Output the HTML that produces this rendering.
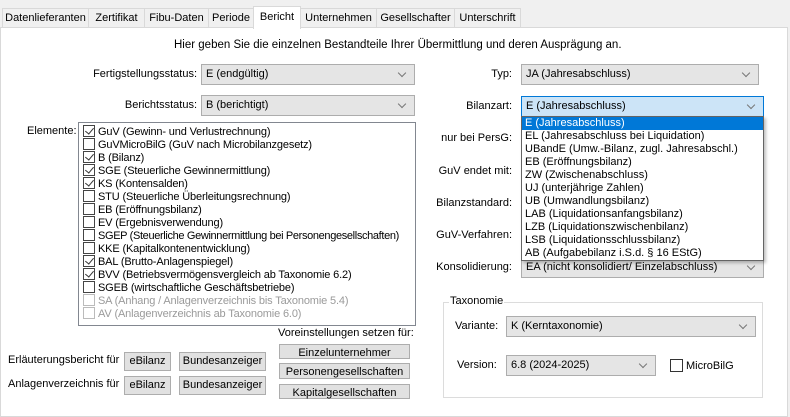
<!DOCTYPE html>
<html><head><meta charset="utf-8"><style>
*{box-sizing:border-box;margin:0;padding:0}
body{width:790px;height:415px;background:#f0f0f0;font-family:"Liberation Sans",sans-serif;font-size:11px;color:#000;position:relative;overflow:hidden}
.a{position:absolute;white-space:nowrap}
.tab{position:absolute;top:8px;height:20px;border:1px solid #d9d9d9;border-bottom:none;background:#f0f0f0;text-align:center;line-height:18px;white-space:nowrap}
.sel{top:6px;height:23px;background:#fff;z-index:3;line-height:20px}
.panel{position:absolute;left:0;top:27px;width:788px;height:390px;background:#fff;border:1px solid #d9d9d9}
.cb{position:absolute;height:21px;background:#e5e5e5;border:1px solid #adadad;padding-left:4px;line-height:19px;white-space:nowrap}
.cb::after{content:"";position:absolute;right:9px;top:5px;width:5px;height:5px;border-right:1px solid #777;border-bottom:1px solid #777;transform:rotate(45deg)}
.lbl{position:absolute;text-align:right;line-height:14px;white-space:nowrap}
.btn{position:absolute;background:#e1e1e1;border:1px solid #adadad;text-align:center;line-height:16px;white-space:nowrap}
.list{position:absolute;left:78px;top:122px;width:338px;height:204px;border:1px solid #828790;background:#fff;overflow:hidden}
.it{position:absolute;left:4px;height:13px;line-height:13px;white-space:nowrap;letter-spacing:-0.15px}
.ck{display:inline-block;width:12px;height:12px;border:1px solid #444;vertical-align:-2px;margin-right:3px;position:relative;background:#fff}
.ck.on::after{content:"";position:absolute;left:3px;top:0px;width:4px;height:7px;border-right:1.5px solid #333;border-bottom:1.5px solid #333;transform:rotate(40deg)}
.dis{color:#9a9a9a}.dis .ck{border-color:#bbb}
.dd{position:absolute;left:521px;top:116px;width:243px;height:145px;background:#fff;border:1px solid #646464;z-index:5;box-shadow:2px 2px 3px rgba(0,0,0,.25)}
.dd div{height:13px;line-height:13px;padding-left:3px;white-space:nowrap}
</style></head><body>
<div class="tab" style="left:2px;width:87px">Datenlieferanten</div>
<div class="tab" style="left:88px;width:57px">Zertifikat</div>
<div class="tab" style="left:144px;width:65px">Fibu-Daten</div>
<div class="tab" style="left:208px;width:46px">Periode</div>
<div class="tab sel" style="left:253px;width:48px">Bericht</div>
<div class="tab" style="left:300px;width:77px">Unternehmen</div>
<div class="tab" style="left:376px;width:79px">Gesellschafter</div>
<div class="tab" style="left:454px;width:67px">Unterschrift</div>
<div class="panel"></div>

<div class="a" style="left:174px;top:39px;font-size:11.5px">Hier geben Sie die einzelnen Bestandteile Ihrer Übermittlung und deren Ausprägung an.</div>

<div class="lbl" style="left:60px;width:137px;top:67px">Fertigstellungsstatus:</div>
<div class="cb" style="left:201px;top:64px;width:214px">E (endgültig)</div>
<div class="lbl" style="left:60px;width:137px;top:98px">Berichtsstatus:</div>
<div class="cb" style="left:201px;top:95px;width:214px">B (berichtigt)</div>

<div class="a" style="left:27px;top:125px">Elemente:</div>
<div class="list">
<div class="it" style="top:2px"><span class="ck on"></span>GuV (Gewinn- und Verlustrechnung)</div>
<div class="it" style="top:15px"><span class="ck"></span>GuVMicroBilG (GuV nach Microbilanzgesetz)</div>
<div class="it" style="top:28px"><span class="ck on"></span>B (Bilanz)</div>
<div class="it" style="top:41px"><span class="ck on"></span>SGE (Steuerliche Gewinnermittlung)</div>
<div class="it" style="top:54px"><span class="ck on"></span>KS (Kontensalden)</div>
<div class="it" style="top:67px"><span class="ck"></span>STU (Steuerliche Überleitungsrechnung)</div>
<div class="it" style="top:80px"><span class="ck"></span>EB (Eröffnungsbilanz)</div>
<div class="it" style="top:93px"><span class="ck"></span>EV (Ergebnisverwendung)</div>
<div class="it" style="top:106px;letter-spacing:-0.35px"><span class="ck"></span>SGEP (Steuerliche Gewinnermittlung bei Personengesellschaften)</div>
<div class="it" style="top:119px"><span class="ck"></span>KKE (Kapitalkontenentwicklung)</div>
<div class="it" style="top:132px"><span class="ck on"></span>BAL (Brutto-Anlagenspiegel)</div>
<div class="it" style="top:145px"><span class="ck on"></span>BVV (Betriebsvermögensvergleich ab Taxonomie 6.2)</div>
<div class="it" style="top:158px"><span class="ck"></span>SGEB (wirtschaftliche Geschäftsbetriebe)</div>
<div class="it dis" style="top:171px"><span class="ck"></span>SA (Anhang / Anlagenverzeichnis bis Taxonomie 5.4)</div>
<div class="it dis" style="top:184px"><span class="ck"></span>AV (Anlagenverzeichnis ab Taxonomie 6.0)</div>
</div>

<div class="a" style="left:278px;top:327px">Voreinstellungen setzen für:</div>
<div class="btn" style="left:279px;top:344px;width:131px;height:15px">Einzelunternehmer</div>
<div class="btn" style="left:279px;top:363px;width:131px;height:16px">Personengesellschaften</div>
<div class="btn" style="left:279px;top:384px;width:131px;height:15px">Kapitalgesellschaften</div>
<div class="a" style="left:8px;top:354px">Erläuterungsbericht für</div>
<div class="btn" style="left:124px;top:352px;width:47px;height:19px">eBilanz</div>
<div class="btn" style="left:179px;top:352px;width:87px;height:19px">Bundesanzeiger</div>
<div class="a" style="left:8px;top:378px">Anlagenverzeichnis für</div>
<div class="btn" style="left:124px;top:376px;width:47px;height:19px">eBilanz</div>
<div class="btn" style="left:179px;top:376px;width:87px;height:19px">Bundesanzeiger</div>

<div class="lbl" style="left:420px;width:92px;top:67px">Typ:</div>
<div class="cb" style="left:521px;top:64px;width:238px">JA (Jahresabschluss)</div>
<div class="lbl" style="left:420px;width:92px;top:99px">Bilanzart:</div>
<div class="cb" style="left:521px;top:96px;width:243px;background:#cce4f7;border-color:#0078d7">E (Jahresabschluss)</div>
<div class="lbl" style="left:420px;width:92px;top:131px">nur bei PersG:</div>
<div class="lbl" style="left:420px;width:92px;top:164px">GuV endet mit:</div>
<div class="lbl" style="left:420px;width:92px;top:196px">Bilanzstandard:</div>
<div class="lbl" style="left:420px;width:92px;top:228px">GuV-Verfahren:</div>
<div class="lbl" style="left:420px;width:92px;top:260px">Konsolidierung:</div>
<div class="cb" style="left:521px;top:257px;width:243px">EA (nicht konsolidiert/ Einzelabschluss)</div>
<div class="dd">
<div style="background:#0078d7;color:#fff">E (Jahresabschluss)</div>
<div>EL (Jahresabschluss bei Liquidation)</div>
<div>UBandE (Umw.-Bilanz, zugl. Jahresabschl.)</div>
<div>EB (Eröffnungsbilanz)</div>
<div>ZW (Zwischenabschluss)</div>
<div>UJ (unterjährige Zahlen)</div>
<div>UB (Umwandlungsbilanz)</div>
<div>LAB (Liquidationsanfangsbilanz)</div>
<div>LZB (Liquidationszwischenbilanz)</div>
<div>LSB (Liquidationsschlussbilanz)</div>
<div>AB (Aufgabebilanz i.S.d. § 16 EStG)</div>
</div>

<div class="a" style="left:443px;top:302px;width:320px;height:96px;border:1px solid #dcdcdc"></div>
<div class="a" style="left:449px;top:295px;background:#fff;padding:0 1px">Taxonomie</div>
<div class="a" style="left:455px;top:320px">Variante:</div>
<div class="cb" style="left:506px;top:316px;width:250px">K (Kerntaxonomie)</div>
<div class="a" style="left:457px;top:359px">Version:</div>
<div class="cb" style="left:506px;top:355px;width:150px">6.8 (2024-2025)</div>
<div class="a" style="left:670px;top:359px;width:13px;height:13px;border:1px solid #333;background:#fff"></div>
<div class="a" style="left:686px;top:360px">MicroBilG</div>
</body></html>
